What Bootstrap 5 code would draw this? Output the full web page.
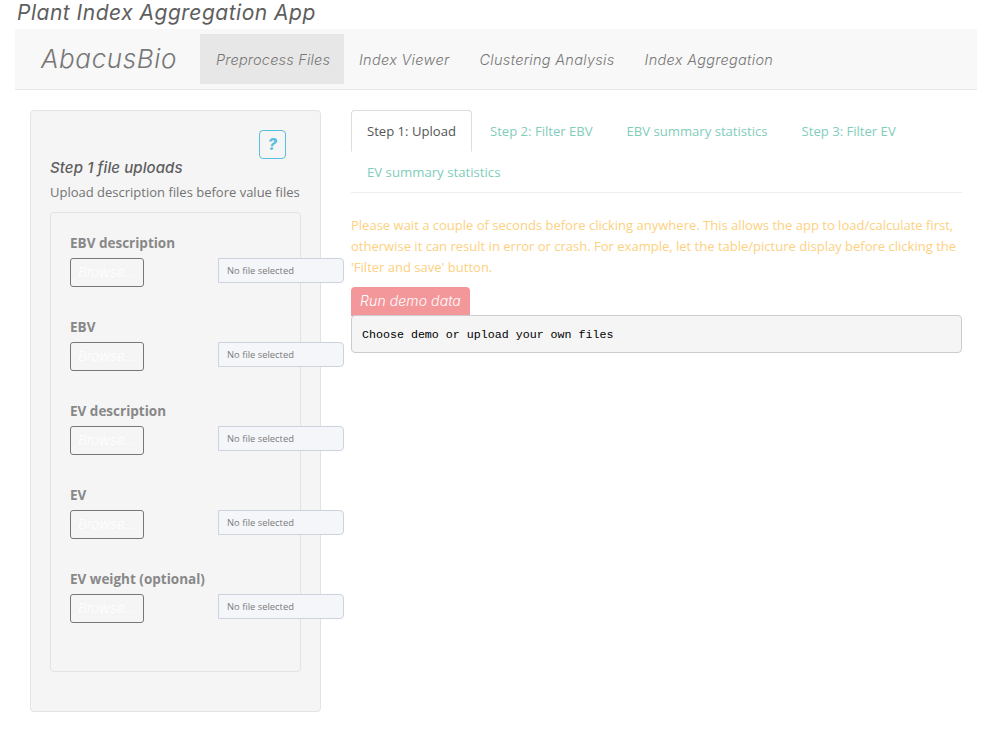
<!DOCTYPE html>
<html lang="en">
<head>
    <meta charset="UTF-8">
    <title>Plant Index Aggregation App</title>
    <link href="https://cdn.jsdelivr.net/npm/bootstrap@5.3.2/dist/css/bootstrap.min.css" rel="stylesheet">
    <style>
        body {
            font-family: "Open Sans", "Noto Sans", sans-serif;
            font-size: 13px;
            line-height: 21px;
            color: #737373;
            background: #fff;
            padding: 0 15px;
            height: 744px;
            overflow: hidden;
        }
        .app-title, .app-brand, .app-link, .side-title, .demo-btn, .browse-btn, .help-btn {
            font-family: "Inter", "Liberation Sans", sans-serif;
            font-style: italic;
        }
        .app-title {
            font-size: 21px;
            line-height: 26px;
            letter-spacing: .5px;
            color: #5e5e5e;
            margin: 0 0 3px 2px;
            font-weight: 400;
        }
        .app-nav {
            background: #f8f8f8;
            border-bottom: 1px solid #e7e7e7;
            height: 61px;
            padding: 5px 0 0 26px;
            margin-bottom: 20px;
        }
        .app-brand {
            font-size: 26px;
            letter-spacing: .6px;
            color: #777;
            width: 159px;
            line-height: 50px;
            font-weight: 300;
        }
        .app-link {
            font-size: 14.5px;
            letter-spacing: .3px;
            color: #777;
            padding: 0 15px;
            line-height: 52px;
            height: 50px;
            text-decoration: none;
            font-weight: 300;
            white-space: nowrap;
        }
        .app-link.on {
            background: #e7e7e7;
            padding: 0 0 0 16px;
            letter-spacing: .2px;
            width: 144px;
        }
        .side-well {
            width: 291px;
            height: 602px;
            margin-left: 15px;
            background: #f5f5f5;
            border: 1px solid #e3e3e3;
            border-radius: 4px;
            padding: 19px;
            flex-shrink: 0;
        }
        .help-btn {
            display: block;
            width: 27px;
            height: 29px;
            margin-left: 209px;
            padding: 0;
            background: transparent;
            border: 1px solid #5bc0de;
            border-radius: 4px;
            color: #5bc0de;
            font-weight: 800;
            font-size: 16px;
            line-height: 27px;
        }
        .side-title {
            font-size: 15px;
            letter-spacing: .1px;
            line-height: 18px;
            color: #5e5e5e;
            margin: 0;
        }
        .side-sub {
            margin: 5px 0 9px;
            color: #737373;
            white-space: nowrap;
        }
        .inner-well {
            background: #f5f5f5;
            border: 1px solid #e3e3e3;
            border-radius: 4px;
            height: 460px;
            padding: 20px 19px 0;
        }
        .up-group {
            height: 84px;
        }
        .up-label {
            font-size: 13.5px;
            font-weight: 700;
            color: #888;
            line-height: 21px;
            margin: 0 0 4px;
            display: block;
        }
        .up-row {
            display: flex;
            align-items: flex-start;
        }
        .browse-btn {
            flex: 0 0 74px;
            width: 74px;
            height: 29px;
            padding: 0;
            background: transparent;
            border: 1px solid #777;
            border-radius: 3px;
            color: #fff;
            font-size: 13.5px;
            font-weight: 300;
        }
        .up-field {
            flex: 0 0 126px;
            width: 126px;
            height: 25px;
            margin-left: 74px;
            padding: 0 8px;
            background: #f5f6f9;
            border: 1px solid #ccd2de;
            border-radius: 0 4px 4px 0;
            font-size: 9.4px;
            line-height: 24px;
            color: #7b7b7b;
            white-space: nowrap;
        }
        .main-col {
            width: 611px;
            margin-left: 30px;
            flex-shrink: 0;
        }
        .step-tabs {
            border-bottom: 1px solid #eee;
            height: 83px;
        }
        .step-tabs .nav-link {
            height: 42px;
            padding: 10px 15px;
            margin: 0 2px 0 0;
            font-size: 13.1px;
            line-height: 21px;
            color: #7fcdbb;
            border: 1px solid transparent;
            border-radius: 4px 4px 0 0;
        }
        .step-tabs .second-row .nav-link {
            height: 41px;
            padding-top: 9px;
            font-size: 13.2px;
        }
        .step-tabs .nav-link.active {
            color: #555;
            background: #fff;
            border-color: #ddd #ddd transparent;
        }
        .wait-note {
            color: #fdd17f;
            font-size: 13.03px;
            margin: 22px 0 9px;
        }
        .demo-btn {
            display: block;
            width: 119px;
            height: 29px;
            padding: 0 0 2px;
            background: #f4979b;
            border: 0;
            border-radius: 4px 4px 0 0;
            color: #fff;
            font-size: 14px;
            letter-spacing: .1px;
            font-weight: 300;
        }
        .demo-out {
            font-family: "Liberation Mono", monospace;
            font-size: 11.65px;
            line-height: 17px;
            color: #000;
            background: #f5f5f5;
            border: 1px solid #ccc;
            border-radius: 4px;
            height: 38px;
            padding: 10px;
            margin: -1px 0 0;
            overflow: hidden;
        }
    </style>
</head>
<body>

<h1 class="app-title">Plant Index Aggregation App</h1>

<nav class="app-nav d-flex align-items-start">
    <span class="app-brand">AbacusBio</span>
    <a class="app-link on" href="#">Preprocess Files</a>
    <a class="app-link" href="#">Index Viewer</a>
    <a class="app-link" href="#">Clustering Analysis</a>
    <a class="app-link" href="#">Index Aggregation</a>
</nav>

<div class="d-flex align-items-start">
    <div class="side-well">
        <button class="help-btn" type="button">?</button>
        <h5 class="side-title">Step 1 file uploads</h5>
        <p class="side-sub">Upload description files before value files</p>
        <div class="inner-well">
            <div class="up-group">
                <label class="up-label">EBV description</label>
                <div class="up-row"><button class="browse-btn" type="button">Browse...</button><div class="up-field">No file selected</div></div>
            </div>
            <div class="up-group">
                <label class="up-label">EBV</label>
                <div class="up-row"><button class="browse-btn" type="button">Browse...</button><div class="up-field">No file selected</div></div>
            </div>
            <div class="up-group">
                <label class="up-label">EV description</label>
                <div class="up-row"><button class="browse-btn" type="button">Browse...</button><div class="up-field">No file selected</div></div>
            </div>
            <div class="up-group">
                <label class="up-label">EV</label>
                <div class="up-row"><button class="browse-btn" type="button">Browse...</button><div class="up-field">No file selected</div></div>
            </div>
            <div class="up-group">
                <label class="up-label">EV weight (optional)</label>
                <div class="up-row"><button class="browse-btn" type="button">Browse...</button><div class="up-field">No file selected</div></div>
            </div>
        </div>
    </div>

    <div class="main-col">
        <div class="step-tabs">
            <ul class="nav">
                <li class="nav-item"><a class="nav-link active" href="#">Step 1: Upload</a></li>
                <li class="nav-item"><a class="nav-link" href="#">Step 2: Filter EBV</a></li>
                <li class="nav-item"><a class="nav-link" href="#">EBV summary statistics</a></li>
                <li class="nav-item"><a class="nav-link" href="#">Step 3: Filter EV</a></li>
            </ul>
            <ul class="nav second-row">
                <li class="nav-item"><a class="nav-link" href="#">EV summary statistics</a></li>
            </ul>
        </div>
        <p class="wait-note">Please wait a couple of seconds before clicking anywhere. This allows the app to load/calculate first, otherwise it can result in error or crash. For example, let the table/picture display before clicking the 'Filter and save' button.</p>
        <button class="demo-btn" type="button">Run demo data</button>
        <pre class="demo-out">Choose demo or upload your own files</pre>
    </div>
</div>

<script src="https://cdn.jsdelivr.net/npm/bootstrap@5.3.2/dist/js/bootstrap.bundle.min.js"></script>
</body>
</html>
